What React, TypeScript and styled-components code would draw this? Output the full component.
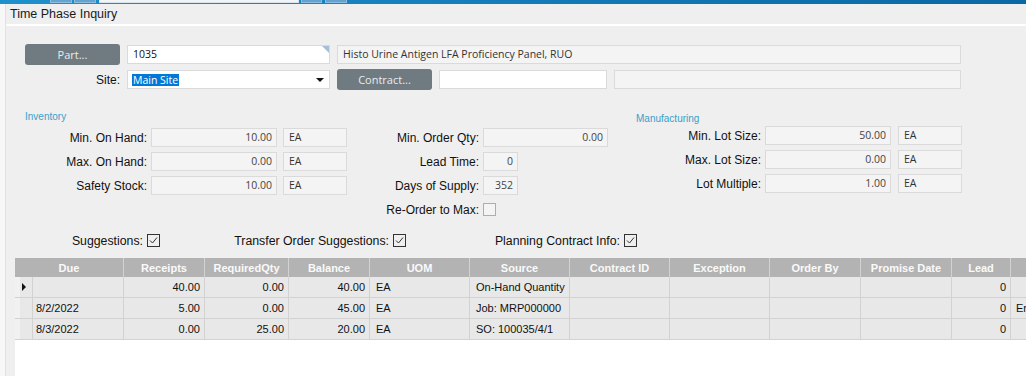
import React from "react";
import styled, { createGlobalStyle } from "styled-components";

const GlobalStyle = createGlobalStyle`
  html, body { margin: 0; padding: 0; background: #f0f0f0; }
  body { font-family: "Liberation Sans", Arial, sans-serif; font-size: 12px; color: #111; overflow: hidden; }
  #root { height: 100vh; }
`;

const Page = styled.div`
  height: 100vh;
  display: flex;
  flex-direction: column;
`;

const TopStrip = styled.div`
  height: 4px;
  flex: none;
  display: flex;
  align-items: flex-start;
  padding-left: 50px;
  background: linear-gradient(to right, #1e90cc, #0a68a5);
`;

const StripTab = styled.div<{ $w: number; $gap: number; $light?: boolean }>`
  width: ${(p) => p.$w}px;
  height: 3px;
  margin-left: ${(p) => p.$gap}px;
  box-sizing: border-box;
  background: ${(p) => (p.$light ? "#f2f4f5" : "#64a2cf")};
  border: 1px solid ${(p) => (p.$light ? "#d5e4ee" : "#8dbde0")};
  border-top: none;
`;

const Body = styled.div`
  flex: 1;
  display: flex;
  min-height: 0;
`;

const Gutter = styled.div`
  width: 5px;
  flex: none;
  background: #f7f7f7;
  border-right: 1px solid #e2e2e2;
`;

const Main = styled.div`
  flex: 1;
  min-width: 0;
  display: flex;
  flex-direction: column;
`;

const TitleBar = styled.div`
  height: 20px;
  line-height: 20px;
  padding-left: 4px;
  font-size: 12.5px;
  color: #1a1a1a;
  border-bottom: 2px solid #ffffff;
  background: #efefef;
`;

const Panel = styled.div`
  flex: 1;
  display: flex;
  flex-direction: column;
  min-height: 0;
  background: #efefef;
`;

const HeaderGrid = styled.div`
  margin: 18px 0 0 19px;
  display: grid;
  grid-template-columns: 95px 203px 95px 168px 347px;
  grid-auto-rows: 21px;
  column-gap: 7px;
  row-gap: 4px;
  align-items: center;
`;

const ActionButton = styled.div`
  height: 21px;
  border-radius: 3px;
  background: #6f7b81;
  color: #ebebeb;
  font-family: "Open Sans", sans-serif;
  font-size: 11px;
  display: flex;
  align-items: center;
  justify-content: center;
`;

const Field = styled.div<{
  $w?: number;
  $align?: "left" | "right";
  $tone?: "white" | "gray";
  $span?: string;
  $ink?: string;
}>`
  position: relative;
  box-sizing: border-box;
  height: 19px;
  width: ${(p) => (p.$w ? `${p.$w}px` : "auto")};
  border: 1px solid #dadada;
  background: ${(p) => (p.$tone === "white" ? "#ffffff" : "#f4f4f4")};
  padding: 0 4px 0 5px;
  font-family: "Open Sans", sans-serif;
  font-size: 10.5px;
  line-height: 17px;
  color: ${(p) => p.$ink ?? "#444"};
  text-align: ${(p) => p.$align ?? "left"};
  white-space: nowrap;
  overflow: hidden;
  grid-column: ${(p) => p.$span ?? "auto"};
`;

const CornerField = styled(Field)`
  &::after {
    content: "";
    position: absolute;
    top: 0;
    right: 0;
    border-style: solid;
    border-width: 0 7px 7px 0;
    border-color: transparent #a7bed8 transparent transparent;
  }
`;

const SelectField = styled(Field)`
  display: flex;
  align-items: center;
  justify-content: space-between;
  padding-right: 5px;
`;

const Highlight = styled.span`
  background: #0078d7;
  color: #ffffff;
  line-height: 12px;
  padding: 0 1px 0 1px;
  margin-left: -1px;
`;

const Label = styled.div`
  text-align: right;
  font-size: 12px;
  color: #111;
  white-space: nowrap;
`;

const Sections = styled.div`
  margin-top: 20px;
  padding-left: 19px;
  display: flex;
  align-items: flex-start;
`;

const Block = styled.div<{ $cols: string; $shift: number; $titleH: number }>`
  margin-left: ${(p) => p.$shift}px;
  display: grid;
  grid-template-columns: ${(p) => p.$cols};
  grid-template-rows: ${(p) => p.$titleH}px;
  grid-auto-rows: 19px;
  column-gap: 4px;
  row-gap: 5px;
  align-items: center;
`;

const SectionTitle = styled.div<{ $lh: number }>`
  grid-column: 1 / -1;
  align-self: start;
  height: 100%;
  line-height: ${(p) => p.$lh}px;
  font-size: 10px;
  color: #3aa0c9;
  white-space: nowrap;
`;

const UomCell = styled(Field)`
  justify-self: end;
`;

const Box = styled.span<{ $on?: boolean }>`
  width: 13px;
  height: 13px;
  box-sizing: border-box;
  border: 1px solid ${(p) => (p.$on ? "#333" : "#adadad")};
  background: ${(p) => (p.$on ? "transparent" : "#f4f4f4")};
  display: inline-flex;
  flex: none;
`;

const Options = styled.div`
  margin-top: 12px;
  padding-left: 19px;
  display: grid;
  grid-template-columns: 135px 246px 231px;
  height: 19px;
  align-items: center;
  justify-items: end;
`;

const Option = styled.div`
  display: flex;
  align-items: center;
  gap: 4px;
  font-size: 12.3px;
`;

const GridWrap = styled.div`
  margin: 8px 0 0 9px;
  flex: 1;
  background: #ffffff;
  overflow: hidden;
`;

const Table = styled.table`
  table-layout: fixed;
  border-collapse: separate;
  border-spacing: 0;
  width: 1096px;
`;

const Th = styled.th`
  height: 19px;
  box-sizing: border-box;
  padding: 0;
  background: #b3b3b3;
  color: #fafafa;
  font-size: 11px;
  font-weight: bold;
  text-align: center;
  border-right: 1px solid #d3d3d3;
  white-space: nowrap;
  overflow: hidden;
`;

const Td = styled.td<{ $num?: boolean; $pad?: number }>`
  height: 21px;
  box-sizing: border-box;
  padding: 0 4px 1px ${(p) => p.$pad ?? 3}px;
  background: #e8e8e8;
  border-right: 1px solid #d2d2d2;
  border-bottom: 1px solid #d2d2d2;
  font-size: 11px;
  color: #111;
  text-align: ${(p) => (p.$num ? "right" : "left")};
  white-space: nowrap;
  overflow: hidden;
`;

const IndicatorTd = styled(Td)`
  padding: 0 0 0 7px;
  background: linear-gradient(to right, #f1f1f1 0 5px, #e8e8e8 5px);
`;

const Check = ({ on }: { on?: boolean }) => (
  <Box $on={on}>
    {on && (
      <svg width="11" height="11" viewBox="0 0 11 11">
        <path d="M2 5.5 L4.5 8 L9 2.5" fill="none" stroke="#333" strokeWidth="1" />
      </svg>
    )}
  </Box>
);

const Arrow = () => (
  <svg width="8" height="4" viewBox="0 0 8 4">
    <path d="M0 0 H8 L4 4 Z" fill="#111" />
  </svg>
);

const RowArrow = () => (
  <svg width="4" height="8" viewBox="0 0 4 8" style={{ display: "block" }}>
    <path d="M0 0 L4 4 L0 8 Z" fill="#111" />
  </svg>
);

const colWidths = [18, 91, 81, 84, 81, 100, 100, 100, 100, 91, 91, 59, 100];
const headers = ["Receipts", "RequiredQty", "Balance", "UOM", "Source", "Contract ID", "Exception", "Order By", "Promise Date", "Lead", ""];

type Row = {
  due: string;
  receipts: string;
  req: string;
  bal: string;
  uom: string;
  source: string;
  lead: string;
  extra: string;
  current?: boolean;
};

const rows: Row[] = [
  { due: "", receipts: "40.00", req: "0.00", bal: "40.00", uom: "EA", source: "On-Hand Quantity", lead: "0", extra: "", current: true },
  { due: "8/2/2022", receipts: "5.00", req: "0.00", bal: "45.00", uom: "EA", source: "Job: MRP000000", lead: "0", extra: "Error" },
  { due: "8/3/2022", receipts: "0.00", req: "25.00", bal: "20.00", uom: "EA", source: "SO: 100035/4/1", lead: "0", extra: "" },
];

export default function App() {
  return (
    <Page>
      <GlobalStyle />
      <TopStrip>
        <StripTab $w={22} $gap={0} />
        <StripTab $w={22} $gap={2} />
        <StripTab $w={200} $gap={3} $light />
        <StripTab $w={21} $gap={2} />
        <StripTab $w={22} $gap={3} />
      </TopStrip>
      <Body>
        <Gutter />
        <Main>
          <TitleBar>Time Phase Inquiry</TitleBar>
          <Panel>
            <HeaderGrid>
              <ActionButton>Part...</ActionButton>
              <CornerField $tone="white" $ink="#111">1035</CornerField>
              <Field $span="3 / 6" $ink="#333">Histo Urine Antigen LFA Proficiency Panel, RUO</Field>

              <Label>Site:</Label>
              <SelectField $tone="white" $ink="#111">
                <Highlight>Main Site</Highlight>
                <Arrow />
              </SelectField>
              <ActionButton>Contract...</ActionButton>
              <Field $tone="white" />
              <Field />
            </HeaderGrid>

            <Sections>
              <Block $cols="122px 126px 66px" $shift={0} $titleH={13}>
                <SectionTitle $lh={14}>Inventory</SectionTitle>
                <Label>Min. On Hand:</Label>
                <Field $align="right">10.00</Field>
                <UomCell $w={64} $ink="#333">EA</UomCell>
                <Label>Max. On Hand:</Label>
                <Field $align="right">0.00</Field>
                <UomCell $w={64} $ink="#333">EA</UomCell>
                <Label>Safety Stock:</Label>
                <Field $align="right">10.00</Field>
                <UomCell $w={64} $ink="#333">EA</UomCell>
              </Block>

              <Block $cols="119px 125px" $shift={13} $titleH={13}>
                <SectionTitle $lh={14} />
                <Label>Min. Order Qty:</Label>
                <Field $align="right">0.00</Field>
                <Label>Lead Time:</Label>
                <Field $align="right" $w={35}>0</Field>
                <Label>Days of Supply:</Label>
                <Field $align="right" $w={35}>352</Field>
                <Label>Re-Order to Max:</Label>
                <Check />
              </Block>

              <Block $cols="125px 126px 67px" $shift={28} $titleH={11}>
                <SectionTitle $lh={18}>Manufacturing</SectionTitle>
                <Label>Min. Lot Size:</Label>
                <Field $align="right">50.00</Field>
                <UomCell $w={64} $ink="#333">EA</UomCell>
                <Label>Max. Lot Size:</Label>
                <Field $align="right">0.00</Field>
                <UomCell $w={64} $ink="#333">EA</UomCell>
                <Label>Lot Multiple:</Label>
                <Field $align="right">1.00</Field>
                <UomCell $w={64} $ink="#333">EA</UomCell>
              </Block>
            </Sections>

            <Options>
              <Option>Suggestions:<Check on /></Option>
              <Option>Transfer Order Suggestions:<Check on /></Option>
              <Option>Planning Contract Info:<Check on /></Option>
            </Options>

            <GridWrap>
              <Table>
                <colgroup>
                  {colWidths.map((w, i) => (
                    <col key={i} style={{ width: w }} />
                  ))}
                </colgroup>
                <thead>
                  <tr>
                    <Th colSpan={2}>Due</Th>
                    {headers.map((h, i) => (
                      <Th key={i}>{h}</Th>
                    ))}
                  </tr>
                </thead>
                <tbody>
                  {rows.map((r, i) => (
                    <tr key={i}>
                      <IndicatorTd>{r.current && <RowArrow />}</IndicatorTd>
                      <Td>{r.due}</Td>
                      <Td $num>{r.receipts}</Td>
                      <Td $num>{r.req}</Td>
                      <Td $num>{r.bal}</Td>
                      <Td $pad={6}>{r.uom}</Td>
                      <Td $pad={6}>{r.source}</Td>
                      <Td />
                      <Td />
                      <Td />
                      <Td />
                      <Td $num>{r.lead}</Td>
                      <Td $pad={5}>{r.extra}</Td>
                    </tr>
                  ))}
                </tbody>
              </Table>
            </GridWrap>
          </Panel>
        </Main>
      </Body>
    </Page>
  );
}
